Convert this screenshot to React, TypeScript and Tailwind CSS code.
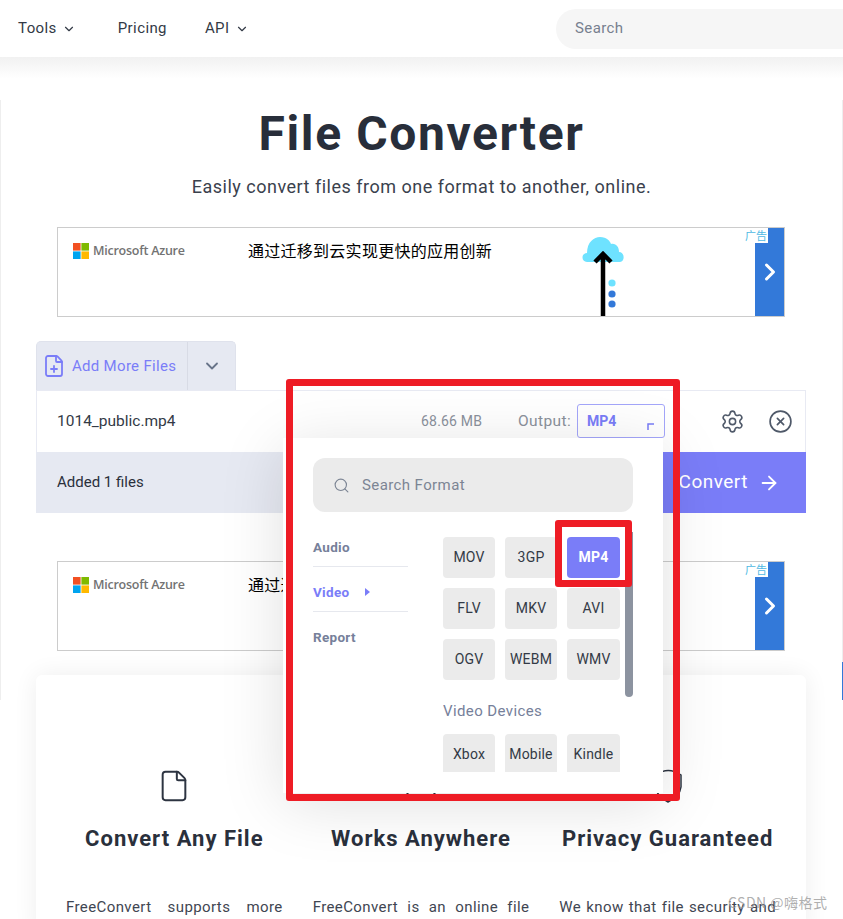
import { ChevronDown, ChevronRight, Settings, CircleX, ArrowRight, Search, FilePlus, File } from "lucide-react";

const cjk = "font-['Noto_Sans_CJK_SC',sans-serif]";

function Ad() {
  return (
    <div className="mx-[57px] flex h-[90px] w-[728px] border border-[#cccccc] bg-white">
      <div className="mt-[15px] ml-[15px] flex h-[16px] w-[175px] shrink-0 items-center gap-[4px]">
        <svg width="16" height="16" viewBox="0 0 16 16" className="shrink-0">
          <rect width="7.6" height="7.6" fill="#f25022" />
          <rect x="8.4" width="7.6" height="7.6" fill="#7fba00" />
          <rect y="8.4" width="7.6" height="7.6" fill="#00a4ef" />
          <rect x="8.4" y="8.4" width="7.6" height="7.6" fill="#ffb900" />
        </svg>
        <span className="font-['Open_Sans',sans-serif] text-[12.5px] font-semibold tracking-[-0.25px] whitespace-nowrap text-[#737373]">Microsoft Azure</span>
      </div>
      <div className={`${cjk} mt-[11px] w-[334px] shrink-0 text-[16px] leading-[22px] tracking-[0.27px] whitespace-nowrap text-black`}>通过迁移到云实现更快的应用创新</div>
      <svg width="44" height="88" viewBox="0 0 44 88" className="shrink-0">
        <path d="M5 34 C-1 34 -1 25 5 25 C5 14 12 9 18 9 C25 9 28 13 29 16 C34 15 37 19 37 24 C43 24 43 34 38 34 Z" fill="#6ee2ff" />
        <path d="M21 88 V26 M13 34 L21 26 L29 34" fill="none" stroke="#000" strokeWidth="4.5" />
        <circle cx="30" cy="55" r="3.6" fill="#6ee2ff" />
        <circle cx="30" cy="66" r="3.6" fill="#3379d9" />
        <circle cx="30" cy="76" r="3.6" fill="#3379d9" />
      </svg>
      <div className="relative ml-auto flex w-[29px] items-center justify-center bg-[#3379d9]">
        <ChevronRight size={28} strokeWidth={2.6} className="text-white" />
        <div className={`${cjk} absolute top-0 left-[-10px] flex h-[15px] w-[23px] items-center bg-white text-[11px] leading-none text-[#4fb9e3]`}>广告</div>
      </div>
    </div>
  );
}

function Feature({ icon, title, body }: { icon: React.ReactNode; title: string; body: string }) {
  return (
    <div className="flex flex-col items-center">
      <div className="flex h-[32px] items-center justify-center text-[#2d3441]">{icon}</div>
      <h3 className="mt-[21px] h-[32px] text-[22px] leading-[32px] font-bold tracking-[1px] whitespace-nowrap text-[#2a303c]">{title}</h3>
      <p className="mt-[38px] text-justify text-[15px] leading-[28px] tracking-[0.4px] text-[#3f4652]">{body}</p>
    </div>
  );
}

function Fmt({ label, active }: { label: string; active?: boolean }) {
  return (
    <div className={`flex h-[41px] items-center justify-center rounded-[4px] text-[14px] tracking-[0.2px] ${active ? "bg-[#7a7df8] font-bold text-white" : "bg-[#ebebeb] text-[#333a46]"}`}>
      {label}
    </div>
  );
}

export default function App() {
  return (
    <div className="relative h-[919px] w-[843px] overflow-hidden bg-white font-['Roboto',sans-serif] text-[#2a303c]">
      <header className="flex h-[57px] items-center bg-white pl-[18px] text-[15px] tracking-[0.4px] text-[#333a46]">
        <span>Tools</span>
        <ChevronDown size={14} className="ml-[5px] shrink-0" />
        <span className="ml-[42px]">Pricing</span>
        <span className="ml-[38px]">API</span>
        <ChevronDown size={14} className="ml-[6px] shrink-0" />
        <div className="ml-auto flex h-[40px] w-[287px] shrink-0 items-center rounded-l-full bg-[#f6f6f6] pl-[19px] text-[#77808f]">Search</div>
      </header>
      <div className="h-[43px] bg-linear-to-b from-[#f1f1f1] via-white to-white" />

      <main className="h-[600px] border-x border-[#eeeeee]">
        <div className="-ml-px w-[843px]">
          <h1 className="h-[66px] text-center text-[48px] leading-[68px] font-bold tracking-[1.6px] text-[#282e3a]">File Converter</h1>
          <p className="h-[42px] text-center text-[18px] leading-[42px] tracking-[0.5px] text-[#3a414d]">Easily convert files from one format to another, online.</p>
          <div className="h-[19px]" />
          <Ad />

          <div className="mt-[24px] ml-[36px] flex h-[49px] w-[200px] rounded-t-[5px] border border-b-0 border-[#dfe2ec] bg-[#e6e9f2]">
            <div className="flex w-[151px] items-center gap-[6px] border-r border-[#d8dbe5] pl-[5px] text-[15px] text-[#7a7df8]">
              <FilePlus size={24} strokeWidth={1.8} />
              <span className="tracking-[0.3px] whitespace-nowrap">Add More Files</span>
            </div>
            <div className="flex flex-1 items-center justify-center text-[#687489]">
              <ChevronDown size={20} strokeWidth={2.2} />
            </div>
          </div>

          <div className="mx-[36px] flex h-[62px] w-[770px] items-center border border-b-0 border-[#e8eaf3] pl-[20px] text-[15.5px] text-[#333a46]">
            <span className="w-[364px]">1014_public.mp4</span>
            <span className="w-[97px] text-[14px] tracking-[0.2px] text-[#8b919c]">68.66 MB</span>
            <span className="w-[59px] tracking-[0.4px] text-[#8b919c]">Output:</span>
            <div className="mt-[13px] flex h-[34px] w-[88px] items-center justify-between self-start rounded-[3px] border border-[#a4a6fa] px-[9px] text-[14px] font-bold text-[#7a7df8]">
              MP4
              <svg width="8" height="8" viewBox="0 0 8 8" className="mt-[9px]"><path d="M1 8 V2 H7" fill="none" stroke="#7a7df8" strokeWidth="1.5" /></svg>
            </div>
            <Settings size={25} strokeWidth={1.5} className="ml-[55px] text-[#4f5969]" />
            <CircleX size={25} strokeWidth={1.6} className="ml-[23px] text-[#4f5969]" />
          </div>

          <div className="mx-[36px] flex h-[61px] w-[770px] items-center bg-[#e6e9f2] pl-[21px] text-[15px] text-[#2a303c]">
            <span>Added 1 files</span>
            <div className="ml-auto flex h-full w-[200px] items-center justify-end gap-[10px] bg-[#7a7df8] pr-[26px] text-[19px] tracking-[0.5px] text-white">
              Convert
              <ArrowRight size={22} strokeWidth={2} />
            </div>
          </div>

          <div className="h-[48px]" />
          <Ad />
          <div className="h-[24px]" />

          <section className="mx-[36px] h-[260px] w-[770px] rounded-[6px] bg-white pt-[95px] shadow-[0_0_24px_rgba(0,0,0,0.07)]">
            <div className="mx-[30px] grid grid-cols-3 gap-[30px]">
              <Feature icon={<File size={34} strokeWidth={1.4} />} title="Convert Any File" body="FreeConvert supports more than 500 file formats. Simply upload your files and convert them to any format." />
              <Feature
                icon={
                  <svg width="36" height="34" viewBox="0 0 36 34" fill="none" stroke="currentColor" strokeWidth="1.5">
                    <ellipse cx="18" cy="15.5" rx="17" ry="15" />
                  </svg>
                }
                title="Works Anywhere"
                body="FreeConvert is an online file converter. So it works on Windows, Mac, Linux or any mobile device."
              />
              <Feature
                icon={
                  <svg width="28" height="34" viewBox="0 0 28 34" fill="none" stroke="currentColor" strokeWidth="1.5">
                    <path d="M2 6 Q14 -3 27 6 V18 Q26 27 14 33 Q2 27 2 18 Z" />
                  </svg>
                }
                title="Privacy Guaranteed"
                body="We know that file security and privacy are important to you. That is why we use 256-bit SSL."
              />
            </div>
          </section>
        </div>
      </main>

      <div className="absolute top-[662px] right-0 h-[38px] w-px bg-[#3379d9]" />

      {/* Format picker popup */}
      <div className="absolute top-[438px] left-[283px] h-[355px] w-[380px] bg-white pt-[20px] pl-[30px] shadow-[0_10px_60px_rgba(0,0,0,0.13)]">
        <div className="flex h-[54px] w-[320px] items-center gap-[12px] rounded-[12px] bg-[#ebebeb] pl-[20px] text-[15px] tracking-[0.4px] text-[#7c8594]">
          <Search size={17} strokeWidth={1.6} />
          Search Format
        </div>
        <div className="mt-[25px] flex">
          <nav className="w-[95px] shrink-0 text-[13.5px] font-bold tracking-[0.3px] text-[#76809a]">
            <div className="h-[30px] border-b border-[#e6e8ee] leading-[20px]">Audio</div>
            <div className="flex h-[45px] items-center gap-[16px] border-b border-[#e6e8ee] pt-[6px] text-[#7a7df8]">
              Video
              <svg width="5" height="8" viewBox="0 0 5 8"><path d="M0 0 L5 4 L0 8 Z" fill="#7a7df8" /></svg>
            </div>
            <div className="flex h-[45px] items-center pt-[6px]">Report</div>
          </nav>
          <div className="ml-[35px] h-[235px] w-[190px] overflow-hidden">
            <div className="grid grid-cols-[52px_52px_53px] gap-x-[10px] gap-y-[10px]">
              <Fmt label="MOV" /><Fmt label="3GP" /><Fmt label="MP4" active />
              <Fmt label="FLV" /><Fmt label="MKV" /><Fmt label="AVI" />
              <Fmt label="OGV" /><Fmt label="WEBM" /><Fmt label="WMV" />
            </div>
            <div className="mt-[21px] mb-[13px] text-[15px] leading-[20px] tracking-[0.4px] text-[#76809a]">Video Devices</div>
            <div className="grid grid-cols-[52px_52px_53px] gap-x-[10px] gap-y-[10px]">
              <Fmt label="Xbox" /><Fmt label="Mobile" /><Fmt label="Kindle" />
            </div>
          </div>
        </div>
        <div className="absolute top-[94px] left-[342px] h-[165px] w-[8px] rounded-b-full bg-[#8c93a0]" />
      </div>

      {/* Annotation frames */}
      <div className="pointer-events-none absolute top-[379px] left-[286px] h-[422px] w-[394px] rounded-[3px] border-[7px] border-[#ee1c25]" />
      <div className="pointer-events-none absolute top-[520px] left-[555px] h-[67px] w-[77px] rounded-[3px] border-[7px] border-[#ee1c25]" />

      <div className={`${cjk} absolute top-[893px] left-[728px] text-[14px] leading-[18px] tracking-[0.5px] text-[#9a9a9a]/80`}>CSDN @嗨格式</div>
    </div>
  );
}
